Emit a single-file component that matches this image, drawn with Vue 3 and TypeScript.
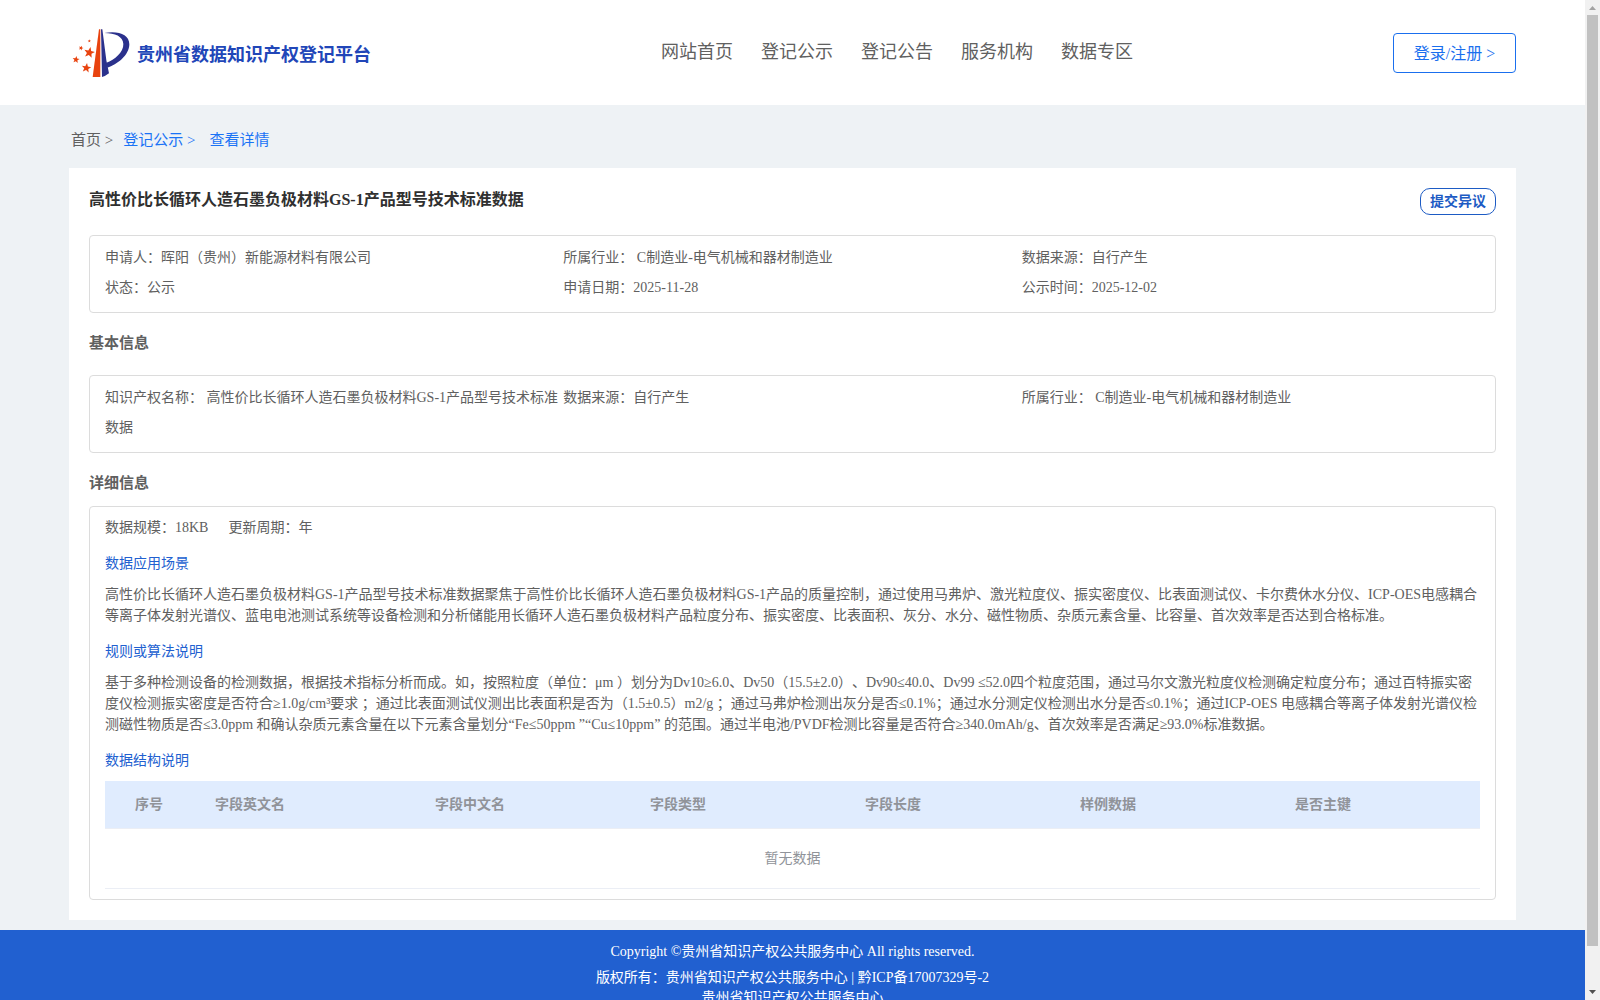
<script setup lang="ts">
interface Field {
  label: string
  value: string
}

const navItems: string[] = ['网站首页', '登记公示', '登记公告', '服务机构', '数据专区']

const summary: Field[] = [
  { label: '申请人：', value: '晖阳（贵州）新能源材料有限公司' },
  { label: '所属行业：', value: ' C制造业-电气机械和器材制造业' },
  { label: '数据来源：', value: '自行产生' },
  { label: '状态：', value: '公示' },
  { label: '申请日期：', value: '2025-11-28' },
  { label: '公示时间：', value: '2025-12-02' },
]

const basics: Field[] = [
  { label: '知识产权名称：', value: ' 高性价比长循环人造石墨负极材料GS-1产品型号技术标准数据' },
  { label: '数据来源：', value: '自行产生' },
  { label: '所属行业：', value: ' C制造业-电气机械和器材制造业' },
]

const scenario =
  '高性价比长循环人造石墨负极材料GS-1产品型号技术标准数据聚焦于高性价比长循环人造石墨负极材料GS-1产品的质量控制，通过使用马弗炉、激光粒度仪、振实密度仪、比表面测试仪、卡尔费休水分仪、ICP-OES电感耦合等离子体发射光谱仪、蓝电电池测试系统等设备检测和分析储能用长循环人造石墨负极材料产品粒度分布、振实密度、比表面积、灰分、水分、磁性物质、杂质元素含量、比容量、首次效率是否达到合格标准。'

const rules =
  '基于多种检测设备的检测数据，根据技术指标分析而成。如，按照粒度（单位：μm ）划分为Dv10≥6.0、Dv50（15.5±2.0）、Dv90≤40.0、Dv99 ≤52.0四个粒度范围，通过马尔文激光粒度仪检测确定粒度分布；通过百特振实密度仪检测振实密度是否符合≥1.0g/cm³要求 ；通过比表面测试仪测出比表面积是否为（1.5±0.5）m2/g ；通过马弗炉检测出灰分是否≤0.1%；通过水分测定仪检测出水分是否≤0.1%；通过ICP-OES 电感耦合等离子体发射光谱仪检测磁性物质是否≤3.0ppm 和确认杂质元素含量在以下元素含量划分“Fe≤50ppm ”“Cu≤10ppm” 的范围。通过半电池/PVDF检测比容量是否符合≥340.0mAh/g、首次效率是否满足≥93.0%标准数据。'

const columns: string[] = ['序号', '字段英文名', '字段中文名', '字段类型', '字段长度', '样例数据', '是否主键']
</script>

<template>
  <div class="window" lang="zh-CN">
    <div class="page">
      <header class="header">
        <a class="brand" href="#">
          <svg class="logo" viewBox="36 24 174 150" aria-hidden="true">
            <defs>
              <path id="star" d="M0-10 2.6-3.4 9.5-3.1 4.1 1.3 5.9 8.1 0 4.2-5.9 8.1-4.1 1.3-9.5-3.1-2.6-3.4Z" />
            </defs>
            <path fill="#e8430f" d="M117 28h4v143H98Z" />
            <path fill="#2b318c" d="M123 28h4l12 93 8 39q-10 8-21 11Z" />
            <path fill="#2b318c" d="M133 39c42-7 75 4 75 34 0 33-37 61-66 70l-3-15c25-8 52-32 51-56-1-23-25-33-57-33Z" />
            <g fill="#e8430f">
              <use href="#star" transform="translate(88 98) rotate(12) scale(1.7)" />
              <use href="#star" transform="translate(79 144) rotate(8) scale(1.5)" />
              <use href="#star" transform="translate(48 119) rotate(8) scale(1.1)" />
              <use href="#star" transform="translate(63 84) rotate(20) scale(.75)" />
              <use href="#star" transform="translate(88 63) scale(.5)" />
            </g>
          </svg>
          <span class="brand-name">贵州省数据知识产权登记平台</span>
        </a>
        <nav class="nav">
          <a v-for="item in navItems" :key="item" href="#">{{ item }}</a>
        </nav>
        <button class="login" type="button">登录/注册 &gt;</button>
      </header>

      <nav class="crumbs">
        <a class="home" href="#">首页 &gt;</a>
        <a href="#">登记公示 &gt;</a>
        <a class="current" href="#">查看详情</a>
      </nav>

      <main class="card">
        <div class="title-row">
          <h1>高性价比长循环人造石墨负极材料GS-1产品型号技术标准数据</h1>
          <button class="objection" type="button">提交异议</button>
        </div>

        <div class="panel fields">
          <div v-for="f in summary" :key="f.label">{{ f.label }}{{ f.value }}</div>
        </div>

        <h2>基本信息</h2>
        <div class="panel fields basics">
          <div v-for="f in basics" :key="f.label">{{ f.label }}{{ f.value }}</div>
        </div>

        <h2 class="detail-title">详细信息</h2>
        <div class="panel detail">
          <div class="scale"><span>数据规模：18KB</span><span>更新周期：年</span></div>
          <h3>数据应用场景</h3>
          <p>{{ scenario }}</p>
          <h3>规则或算法说明</h3>
          <p>{{ rules }}</p>
          <h3>数据结构说明</h3>
          <table>
            <colgroup>
              <col class="col-index" />
              <col class="col-name" />
              <col v-for="n in 5" :key="n" />
            </colgroup>
            <thead>
              <tr><th v-for="c in columns" :key="c" scope="col">{{ c }}</th></tr>
            </thead>
            <tbody>
              <tr><td :colspan="columns.length">暂无数据</td></tr>
            </tbody>
          </table>
        </div>
      </main>

      <footer class="footer">
        <div>Copyright ©贵州省知识产权公共服务中心 All rights reserved.</div>
        <div>版权所有：贵州省知识产权公共服务中心 | 黔ICP备17007329号-2</div>
        <div class="last">贵州省知识产权公共服务中心</div>
      </footer>
    </div>

    <div class="scrollbar" aria-hidden="true">
      <svg viewBox="0 0 15 15"><path fill="#a3a3a3" d="M4 10 7.500 6 11 10Z" /></svg>
      <div class="track"><div class="thumb"></div></div>
      <svg viewBox="0 0 15 15"><path fill="#505050" d="M4 5h7L7.500 9Z" /></svg>
    </div>
  </div>
</template>

<style>
body {
  margin: 0;
}
</style>

<style scoped>
* {
  box-sizing: border-box;
}
.window {
  display: flex;
  height: 100vh;
  font-family: "Liberation Serif", "Noto Sans CJK SC", serif;
  font-size: 14px;
  line-height: 21px;
  color: #606060;
  text-spacing-trim: space-all;
}
.page {
  flex: 1;
  min-width: 0;
  overflow-y: auto;
  scrollbar-width: none;
  background: #eef2f5;
}
a {
  color: inherit;
  text-decoration: none;
}
button {
  font-family: inherit;
  background: #fff;
  cursor: pointer;
}
h1,
h2,
h3,
p {
  margin: 0;
}
.header {
  display: flex;
  align-items: center;
  height: 105px;
  padding: 0 69px;
  background: #fff;
}
.brand {
  display: flex;
  align-items: center;
  gap: 7px;
  padding-left: 3px;
}
.logo {
  width: 58px;
  height: 50px;
}
.brand-name {
  padding-top: 5px;
  font-size: 18px;
  font-weight: 700;
  color: #2146b8;
}
.nav {
  flex: 1;
  display: flex;
  justify-content: center;
  gap: 28px;
  padding-left: 30px;
  font-size: 18px;
}
.login {
  width: 123px;
  height: 40px;
  padding: 0 0 2px;
  border: 1px solid #1a6fee;
  border-radius: 4px;
  font-size: 16px;
  color: #1a6fee;
}
.crumbs {
  display: flex;
  align-items: center;
  gap: 10px;
  height: 63px;
  padding: 8px 71px 0;
  font-size: 15px;
  color: #1a73f5;
}
.home {
  color: #606060;
}
.current {
  margin-left: 4px;
}
.card {
  margin: 0 69px 10px;
  padding: 20px;
  background: #fff;
}
.title-row {
  display: flex;
  justify-content: space-between;
  margin-bottom: 20px;
}
h1 {
  font-size: 16px;
  line-height: 23px;
  color: #303030;
}
.objection {
  width: 76px;
  height: 27px;
  padding: 0 0 3px;
  border: 1px solid #1d5bc4;
  border-radius: 10px;
  font-size: 14px;
  font-weight: 700;
  color: #1d5bc4;
}
.panel {
  border: 1px solid #dcdcdc;
  border-radius: 4px;
}
.fields {
  display: grid;
  grid-template-columns: repeat(3, minmax(0, 1fr));
  padding: 7px 15px 9px;
  line-height: 30px;
}
h2 {
  margin: 20px 0 21px;
  font-size: 15px;
}
h2.detail-title {
  margin-bottom: 12px;
}
.detail {
  padding: 10px 15px;
}
.scale {
  display: flex;
  gap: 20px;
}
h3 {
  margin: 15px 0 10px;
  font-size: 14px;
  font-weight: 400;
  color: #2160d0;
}
table {
  width: 100%;
  table-layout: fixed;
  border-collapse: separate;
  border-spacing: 0;
  color: #909399;
}
.col-index {
  width: 80px;
}
.col-name {
  width: 220px;
}
th {
  height: 48px;
  padding: 0 0 0 30px;
  border-bottom: 1px solid #ebeef5;
  background: #e0ecfe;
  text-align: left;
}
td {
  height: 60px;
  padding: 0;
  border-bottom: 1px solid #ebeef5;
  text-align: center;
}
.footer {
  height: 112px;
  padding-top: 9px;
  background: #2160d0;
  color: #fff;
  line-height: 26px;
  text-align: center;
}
.last {
  line-height: 14px;
}
.scrollbar {
  display: flex;
  flex-direction: column;
  width: 15px;
  background: #f1f1f1;
}
.scrollbar svg {
  width: 15px;
  height: 15px;
}
.track {
  flex: 1;
  padding: 0 2px;
}
.thumb {
  height: 96%;
  background: #c1c1c1;
}
</style>
